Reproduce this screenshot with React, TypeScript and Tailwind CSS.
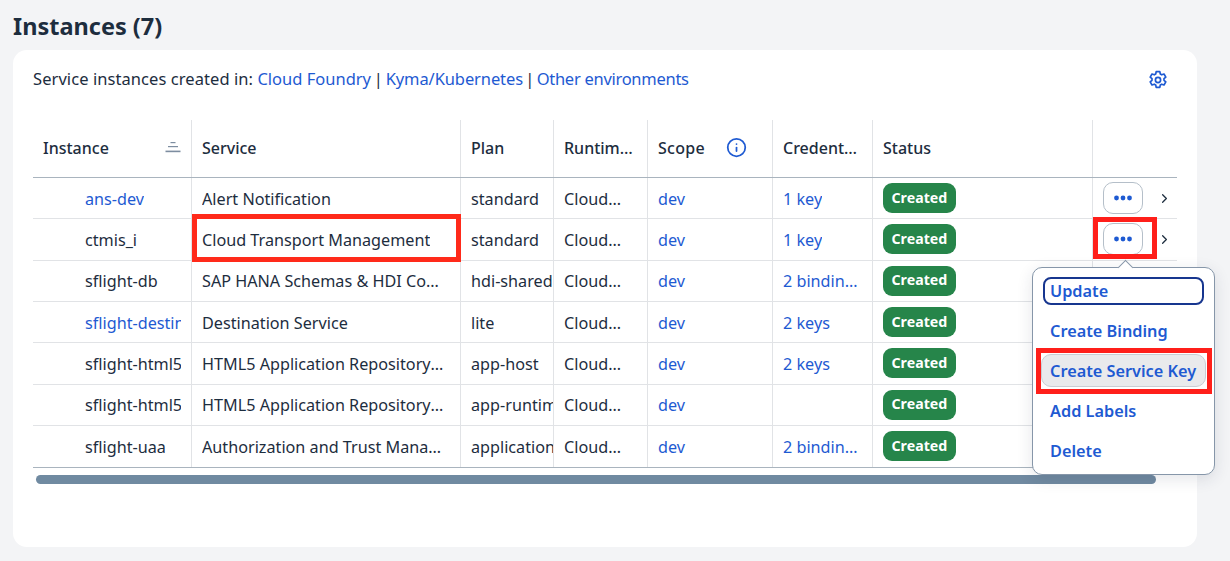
import { ChevronRight, Info } from "lucide-react";

type Row = { name: string; link?: boolean; service: string; plan: string; creds: string };

const rows: Row[] = [
  { name: "ans-dev", link: true, service: "Alert Notification", plan: "standard", creds: "1 key" },
  { name: "ctmis_i", service: "Cloud Transport Management", plan: "standard", creds: "1 key" },
  { name: "sflight-db", service: "SAP HANA Schemas & HDI Containers", plan: "hdi-shared", creds: "2 bindings" },
  { name: "sflight-destination", link: true, service: "Destination Service", plan: "lite", creds: "2 keys" },
  { name: "sflight-html5-host", service: "HTML5 Application Repository Service", plan: "app-host", creds: "2 keys" },
  { name: "sflight-html5-runtime", service: "HTML5 Application Repository Service", plan: "app-runtime", creds: "" },
  { name: "sflight-uaa", service: "Authorization and Trust Management", plan: "application", creds: "2 bindings" },
];

const cols = "grid grid-cols-[158px_269px_93px_94px_125px_100px_220px_85px]";
const cell = "border-l border-[#e1e3e6] first:border-l-0 px-[10px] overflow-hidden whitespace-nowrap flex items-center min-w-0";
const link = "text-[#1e5ad2]";

function Truncate({ children, className = "" }: { children: React.ReactNode; className?: string }) {
  return <span className={`block overflow-hidden text-ellipsis whitespace-nowrap ${className}`}>{children}</span>;
}

function Dots() {
  return (
    <svg width="20" height="6" viewBox="0 0 20 6" fill="#1e5ad2">
      <circle cx="3.5" cy="3" r="2.4" />
      <circle cx="10" cy="3" r="2.4" />
      <circle cx="16.5" cy="3" r="2.4" />
    </svg>
  );
}

function Gear() {
  return (
    <svg width="20" height="20" viewBox="0 0 20 20" fill="none" stroke="#1e5ad2" strokeWidth="1.7" strokeLinejoin="round">
      <path d="M8.2 1.6h3.6l.5 2.4 1.4.8 2.3-.8 1.8 3.1-1.8 1.6v1.6l1.8 1.6-1.8 3.1-2.3-.8-1.4.8-.5 2.4H8.2l-.5-2.4-1.4-.8-2.3.8-1.8-3.1 1.8-1.6V8.7L2.2 7.1 4 4l2.3.8 1.4-.8z" />
      <circle cx="10" cy="10" r="2.6" />
    </svg>
  );
}

function SortIcon() {
  return (
    <svg width="16" height="11" viewBox="0 0 16 11" fill="#7d8da0">
      <rect x="5.5" y="0" width="5" height="1.2" />
      <rect x="3" y="4" width="10" height="1.2" />
      <rect x="0.5" y="8.6" width="15" height="1.6" />
    </svg>
  );
}

export default function App() {
  return (
    <div className="relative h-[561px] w-[1230px] overflow-hidden bg-[#f3f4f6] font-['Noto_Sans','Open_Sans',sans-serif] text-[16.2px] text-[#1d2d3e]">
      <h1 className="pl-[13px] pt-[10px] text-[23.5px] font-bold leading-[32px]">Instances (7)</h1>

      <section className="ml-[13px] mt-[8px] h-[497px] w-[1184px] rounded-[14px] bg-white pl-[20px] pr-[20px]">
        <div className="flex h-[59px] items-center justify-between pr-[9px]">
          <p className="text-[16.5px]">
            <span className="tracking-[0.07px]">Service instances created in:</span>{" "}
            <span className={link}>Cloud Foundry</span>
            <span className="mx-[-1.5px]"> | </span>
            <span className={`${link} tracking-[-0.1px]`}>Kyma/Kubernetes</span>
            <span className="mx-[-2px]"> | </span>
            <span className={`${link} tracking-[-0.28px]`}>Other environments</span>
          </p>
          <Gear />
        </div>

        <div className="mt-[11px] w-[1144px] overflow-hidden">
          <div className="w-[1229px]">
            <div className={`${cols} h-[58px] border-b border-[#a9b4be] text-[16px] font-medium`}>
              <div className={`${cell} justify-between !pr-[10px] pb-[2px]`}>
                <span>Instance</span>
                <SortIcon />
              </div>
              <div className={`${cell} pb-[2px]`}>Service</div>
              <div className={`${cell} pb-[2px]`}>Plan</div>
              <div className={`${cell} pb-[2px]`}><Truncate>Runtime Environment</Truncate></div>
              <div className={`${cell} gap-[21px] pb-[2px]`}>
                <span className="tracking-[0.3px]">Scope</span>
                <Info size={21} strokeWidth={2} className="shrink-0 text-[#1e5ad2]" />
              </div>
              <div className={`${cell} !pr-[12px] pb-[2px]`}><Truncate>Credentials</Truncate></div>
              <div className={`${cell} pb-[2px]`}>Status</div>
              <div className={cell} />
            </div>

            {rows.map((r, i) => (
              <div key={r.name + i} className={`${cols} border-b ${i === 6 ? "h-[42px] border-[#a9b4be]" : "h-[41.33px] border-[#e1e3e6]"}`}>
                <div className={`${cell} !pl-[52px] ${r.link ? link : ""}`}>
                  <span className="block overflow-hidden pt-[1px]">{r.name}</span>
                </div>
                <div className={`${cell} !pr-[16px]`}><Truncate className="pt-[1px]">{r.service}</Truncate></div>
                <div className={`${cell} !pr-0`}><span className="block overflow-hidden pt-[1px]">{r.plan}</span></div>
                <div className={`${cell} !pr-[22px]`}><Truncate className="pt-[1px]">Cloud Foundry</Truncate></div>
                <div className={`${cell} ${link}`}><span className="pt-[1px]">dev</span></div>
                <div className={`${cell} ${link} !pr-[12px]`}><Truncate className="pt-[1px]">{r.creds}</Truncate></div>
                <div className={cell}>
                  <span className="rounded-[9px] bg-[#26854a] px-[8.5px] pb-[4.5px] pt-[3.5px] text-[14.2px] leading-[22px] font-bold text-white">Created</span>
                </div>
                <div className={`${cell} !px-0`}>
                  {i < 2 && (
                    <>
                      <button className="ml-[10px] flex h-[32px] w-[40px] items-center justify-center rounded-[10px] border border-[#b5bfc9] bg-white">
                        <Dots />
                      </button>
                      <ChevronRight size={15} strokeWidth={2} className="ml-[14px] shrink-0 text-[#1d2d3e]" />
                    </>
                  )}
                </div>
              </div>
            ))}
          </div>
        </div>

        <div className="ml-[3px] mt-[7.5px] h-[9px] w-[1120px] rounded-full bg-[#708aa1]" />
      </section>

      {/* highlight frames drawn over the table */}
      <div className="absolute left-[192px] top-[214px] h-[48px] w-[269px] border-[5px] border-[#ff2a1a]" />
      <div className="absolute left-[1093px] top-[217px] h-[42px] w-[64px] border-[5px] border-[#ff1f1a]" />

      {/* actions popover */}
      <div className="absolute left-[1032px] top-[267px] h-[208px] w-[183px] rounded-[10px] border border-[#8696a9] bg-white shadow-[0_4px_16px_rgba(29,45,62,0.12)]">
        <div className="absolute -top-[6px] left-[87px] h-[11px] w-[11px] rotate-45 border-l border-t border-[#8696a9] bg-white" />
        <div className="relative flex flex-col px-[10px] pt-[9px] text-[16.3px] font-semibold text-[#1e5ad2]">
          <div className="flex h-[28px] items-center rounded-[8px] border-2 border-[#17368f] pl-[5px]">Update</div>
          <div className="mt-[12px] flex h-[28px] items-center pl-[7px]">Create Binding</div>
          <div className="-mx-[2px] mt-[9px] flex h-[33px] items-center rounded-[10px] border border-[#c9ced4] bg-[#e9eaec] pl-[8px] pt-[2px]">Create Service Key</div>
          <div className="mt-[10px] flex h-[28px] items-center pl-[7px]">Add Labels</div>
          <div className="mt-[12px] flex h-[28px] items-center pl-[7px]">Delete</div>
        </div>
      </div>
      <div className="absolute left-[1036px] top-[348px] h-[46px] w-[176px] border-[5px] border-[#ff1f1a]" />
    </div>
  );
}
